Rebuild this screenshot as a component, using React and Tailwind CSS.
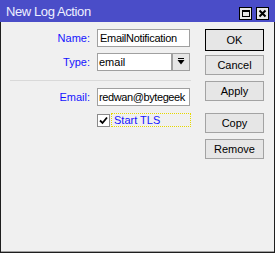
import React from 'react';

const font = { fontFamily: '"Liberation Sans", Arial, sans-serif' };

const WinButton = ({ children, primary, className = '' }) => (
    <button
        className={`w-[59px] h-[20px] text-[11px] text-black leading-none flex items-center justify-center bg-[#e6e6e6] border ${
            primary ? 'border-black' : 'border-[#a3a3a3]'
        } ${className}`}
    >
        {children}
    </button>
);

const Field = ({ label, children, className = '' }) => (
    <div className={`flex items-center ${className}`}>
        <span className="w-[81px] pr-[1px] text-right text-[11px] text-[#1414ff]">{label}</span>
        <div className="ml-[6px] flex">{children}</div>
    </div>
);

const App = () => {
    return (
        <div className="w-[275px] h-[253px] flex flex-col bg-[#4a4dc8]" style={font}>
            {/* Title bar */}
            <div className="h-[22px] flex items-center pl-[6px] pr-[6px] shrink-0">
                <span className="text-[13px] text-[#eef0ff] tracking-[-0.4px] mt-[2px]">New Log Action</span>
                <div className="ml-auto flex gap-[4px] mt-[4px]">
                    <div className="w-[13px] h-[13px] bg-[#e8e8e8] border border-black flex items-center justify-center">
                        <div className="w-[8px] h-[7px] border border-black border-t-2" />
                    </div>
                    <div className="w-[13px] h-[13px] bg-[#e8e8e8] border border-black flex items-center justify-center">
                        <svg width="9" height="9" viewBox="0 0 9 9">
                            <path d="M1.5 1.5 L7.5 7.5 M7.5 1.5 L1.5 7.5" stroke="black" strokeWidth="2" />
                        </svg>
                    </div>
                </div>
            </div>

            {/* Body */}
            <div className="flex-1 bg-[#f0f0f0] border-x border-b border-[#1e1e1e]">
                <div className="h-full border-b border-[#a0a0a0] flex pl-[9px] pt-[7px]">
                    {/* Form */}
                    <div className="w-[181px] flex flex-col">
                        <Field label="Name:">
                            <div className="w-[93px] h-[18px] bg-white border border-[#a0a0a0] px-[2px] text-[11px] leading-[16px] text-black whitespace-nowrap overflow-hidden tracking-[-0.3px]">
                                EmailNotification
                            </div>
                        </Field>
                        <Field label="Type:" className="mt-[6px]">
                            <div className="w-[75px] h-[18px] bg-white border border-[#a0a0a0] px-[1px] text-[11px] leading-[16px] text-black">
                                email
                            </div>
                            <div className="w-[18px] h-[18px] bg-[#e6e6e6] border border-[#a0a0a0] flex items-center justify-center">
                                <svg width="8" height="8" viewBox="0 0 8 8">
                                    <rect x="1" y="0" width="6" height="1" fill="black" />
                                    <path d="M0.5 2 H7.5 L4 6.5 Z" fill="black" />
                                </svg>
                            </div>
                        </Field>
                        <div className="mt-[9px] h-px bg-[#d9d9d9]" />
                        <Field label="Email:" className="mt-[7px]">
                            <div className="w-[93px] h-[18px] bg-white border border-[#a0a0a0] pl-[1px] text-[11px] leading-[16px] text-black whitespace-nowrap overflow-hidden tracking-[-0.4px]">
                                redwan@bytegeek
                            </div>
                        </Field>
                        <div className="mt-[7px] ml-[87px] flex items-center">
                            <div className="w-[13px] h-[13px] bg-white border border-[#8a8a8a] flex items-center justify-center">
                                <svg width="9" height="9" viewBox="0 0 9 9">
                                    <path d="M1 4.5 L3.5 7 L8 1.5" stroke="black" strokeWidth="1.8" fill="none" />
                                </svg>
                            </div>
                            <div className="ml-[1px] w-[80px] h-[14px] border border-dotted border-black outline outline-1 outline-dotted outline-[#e6d800] -outline-offset-1 px-[2px] text-[11px] leading-[12px] text-[#1414ff]">
                                Start TLS
                            </div>
                        </div>
                    </div>

                    {/* Buttons */}
                    <div className="ml-[14px] flex flex-col">
                        <WinButton primary className="h-[22px]">OK</WinButton>
                        <WinButton className="mt-[4px]">Cancel</WinButton>
                        <WinButton className="mt-[6px]">Apply</WinButton>
                        <WinButton className="mt-[12px]">Copy</WinButton>
                        <WinButton className="mt-[6px]">Remove</WinButton>
                    </div>
                </div>
            </div>
        </div>
    );
};

export default App;
